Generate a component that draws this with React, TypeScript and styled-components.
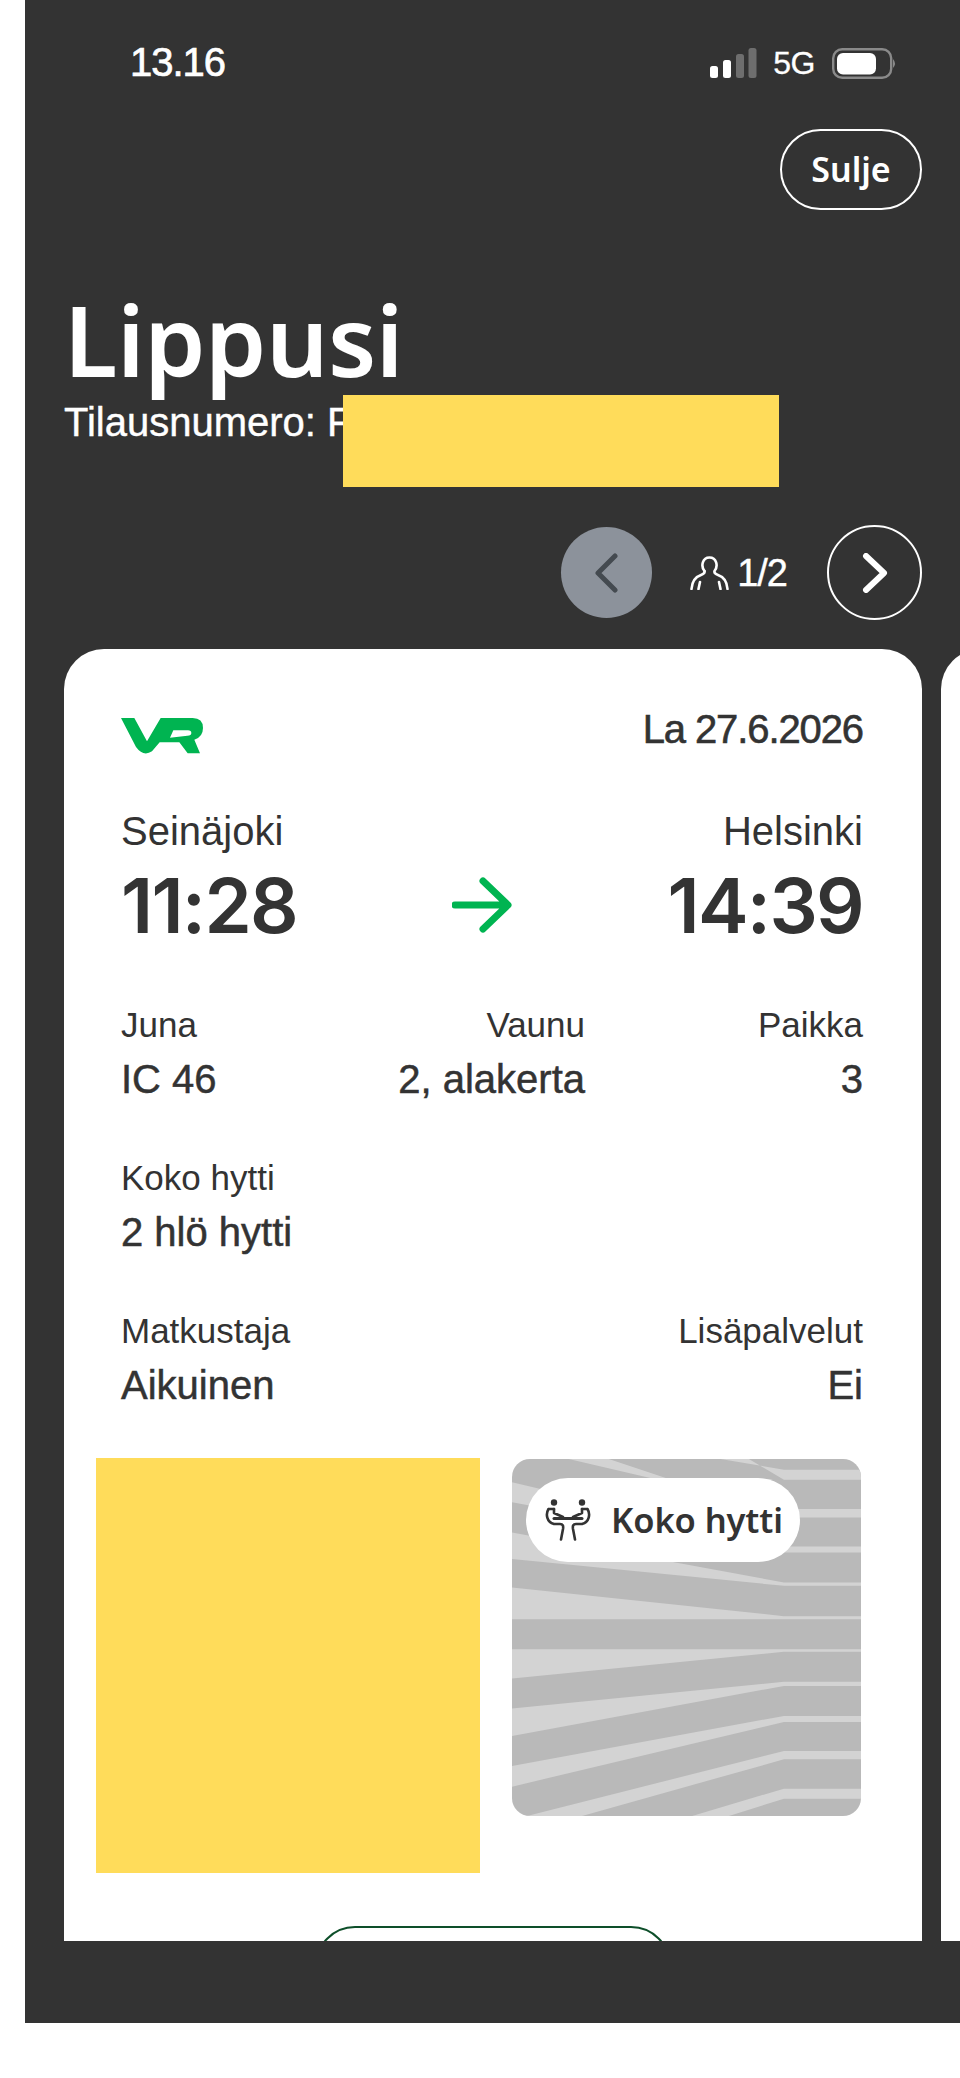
import React from "react";
import styled, { createGlobalStyle } from "styled-components";

const Global = createGlobalStyle`
  html, body { margin: 0; padding: 0; background: #fff; }
  #root { width: 960px; height: 2078px; overflow: hidden; }
`;
const HELV = `"Liberation Sans", Arial, sans-serif`;
const VRF = `"Noto Sans", sans-serif`;

const Page = styled.div`
  width: 960px; height: 2078px; background: #fff; padding-left: 25px; box-sizing: border-box; overflow: hidden;
`;
const Panel = styled.main`
  width: 935px; height: 2023px; background: #333; overflow: hidden; display: flex; flex-direction: column; color: #fff;
`;
const StatusBar = styled.div`
  height: 129px; box-sizing: border-box; padding: 42px 63px 0 105px; display: flex; justify-content: space-between; align-items: flex-start; flex: none;
`;
const Clock = styled.span`
  font: 400 40px/40px ${HELV}; letter-spacing: -1px; -webkit-text-stroke: .7px #fff;
`;
const StatusRight = styled.div`
  display: flex; align-items: center; margin-top: 5px;
`;
const Net = styled.span`
  font: 400 32px/32px ${HELV}; margin: 0 17px 0 16px; letter-spacing: -.5px; -webkit-text-stroke: .3px #fff;
`;
const CloseRow = styled.div`
  display: flex; justify-content: flex-end; padding-right: 38px; flex: none;
`;
const CloseButton = styled.button`
  width: 142px; height: 81px; border: 2px solid #fff; border-radius: 41px; background: transparent; color: #fff; box-sizing: border-box;
  font: 600 34px/1 ${VRF}; padding: 0 0 2px;
`;
const Title = styled.h1`
  margin: 70px 0 0 39px; padding: 0; font: 600 98px/118px ${VRF}; color: #fff; letter-spacing: -.5px; flex: none; height: 117px;
`;
const OrderLine = styled.div`
  position: relative; margin: 0 0 0 39px; font: 400 40px/46px ${HELV}; flex: none; padding-top: 2px; letter-spacing: 0; -webkit-text-stroke: .4px #fff;
`;
const Redaction = styled.div<{ $w: number; $h: number }>`
  position: absolute; background: #ffdc5a; width: ${p => p.$w}px; height: ${p => p.$h}px;
`;
const OrderRedaction = styled(Redaction)`
  left: 279px; top: -2px;
`;
const Nav = styled.div`
  display: flex; justify-content: flex-end; align-items: center; padding-right: 38px; margin-top: 80px; flex: none; height: 95px;
`;
const Circle = styled.button<{ $size: number; $disabled?: boolean }>`
  width: ${p => p.$size}px; height: ${p => p.$size}px; border-radius: 50%; box-sizing: border-box; padding: 0; display: flex; align-items: center; justify-content: center;
  border: ${p => (p.$disabled ? "none" : "2.5px solid #fff")}; background: ${p => (p.$disabled ? "#8c929b" : "transparent")};
`;
const Counter = styled.div`
  display: flex; align-items: center; gap: 8px; margin: 0 40px 0 38px; font: 400 38px/40px ${HELV}; letter-spacing: -1px; -webkit-text-stroke: .4px #fff;
`;
const Carousel = styled.div`
  display: flex; gap: 19px; margin: 29px 0 0 39px; flex: none; height: 1292px;
`;
const Card = styled.section`
  width: 858px; height: 1292px; flex: none; box-sizing: border-box; background: #fff; border-radius: 40px 40px 0 0; color: #333; padding: 69px 59px 0 57px; overflow: hidden;
`;
const NextCard = styled.div`
  width: 60px; height: 1292px; flex: none; background: #fff; border-radius: 40px 0 0 0;
`;
const Head = styled.div`
  display: flex; justify-content: space-between; align-items: flex-start; height: 80px;
`;
const DateText = styled.span`
  font: 400 40px/44px ${HELV}; letter-spacing: -1.1px; -webkit-text-stroke: .6px #333; margin-top: -11px;
`;
const Row = styled.div<{ $top: number }>`
  display: flex; justify-content: space-between; margin-top: ${p => p.$top}px;
`;
const Station = styled.span`
  font: 400 40px/46px ${HELV};
`;
const TimeRow = styled.div`
  display: flex; justify-content: space-between; align-items: center; height: 72px; margin-top: 15px;
`;
const Time = styled.span`
  font: 600 76px/72px Inter, sans-serif; letter-spacing: -1.7px;
`;
const ArrowBox = styled.span`
  display: flex;
`;
const Field = styled.div<{ $end?: boolean }>`
  display: flex; flex-direction: column; white-space: nowrap; align-items: ${p => (p.$end ? "flex-end" : "flex-start")};
`;
const Label = styled.span`
  font: 400 35px/40px ${HELV};
`;
const Value = styled.span`
  font: 400 40px/44px ${HELV}; margin-top: 12px; -webkit-text-stroke: .5px #333; letter-spacing: 0;
`;
const TripleRow = styled.div`
  display: grid; grid-template-columns: 1fr 184px 278px; margin-top: 64px;
`;
const Media = styled.div`
  display: flex; align-items: flex-start; margin: 51px 0 0 -25px;
`;
const MediaYellow = styled.div`
  width: 384px; height: 415px; background: #ffdc5a; flex: none;
`;
const CabinImage = styled.div`
  position: relative; width: 349px; height: 357px; margin: 1px 0 0 32px; border-radius: 18px; overflow: hidden; background: #b9b9b9; flex: none;
`;
const Stripes = styled.svg`
  display: block; width: 349px; height: 357px;
`;
const Badge = styled.div`
  position: absolute; left: 14px; top: 19px; width: 274px; height: 84px; border-radius: 42px; background: #fff; display: flex; align-items: center; padding-left: 19px; box-sizing: border-box; gap: 20px;
  color: #333; font: 600 34.5px/1 ${VRF}; letter-spacing: -.1px;
`;
const GreenButton = styled.div`
  width: 356px; height: 90px; border: 2.5px solid #0e4f2a; border-radius: 40px; margin: 53px 0 0 194px; box-sizing: border-box;
`;

const stripes = [
  "236,60 356,60 881,235 1112,235 1112,210 881,210",
  "691,60 776,60 881,122 1112,122 1112,92 881,92",
  "66,130 66,190 881,340 1112,340 1112,322 881,322",
  "66,280 66,360 881,440 1112,440 1112,430 881,430",
  "66,445 66,540 1112,540 1112,531 881,531",
  "66,630 66,718 881,638 1112,638 1112,630",
  "66,808 66,890 881,740 1112,740 1112,728 881,728",
  "66,980 66,1042 881,848 1112,848 1112,830 881,830",
  "111,1130 276,1130 881,960 1112,960 1112,935 881,935",
  "606,1130 716,1130 881,1078 1112,1078 1112,1048 881,1048",
];

function Signal() {
  return (
    <svg width="47" height="30" viewBox="0 0 47 30">
      <rect x="0" y="18" width="8" height="12" rx="2.5" fill="#fff" />
      <rect x="13" y="12" width="8" height="18" rx="2.5" fill="#fff" />
      <rect x="26" y="6" width="8" height="24" rx="2.5" fill="#6e6e6e" />
      <rect x="38.5" y="0" width="8" height="30" rx="2.5" fill="#6e6e6e" />
    </svg>
  );
}
function Battery() {
  return (
    <svg width="65" height="31" viewBox="0 0 65 31">
      <rect x="1.2" y="1.2" width="58" height="28.6" rx="9" fill="none" stroke="#8a8a8a" strokeWidth="2.4" />
      <rect x="5" y="5" width="39" height="21.5" rx="6" fill="#fff" />
      <path d="M61 11 Q65 15.5 61 20 Z" fill="#8a8a8a" />
    </svg>
  );
}
function VRLogo() {
  return (
    <svg width="82" height="36" viewBox="65 55 246 108">
      <path
        fill="#00b451"
        fillRule="evenodd"
        d="M65 55 H105 L143 125 L184 55 H280 Q311 55 311 85 Q311 112 285 120 L302 161 H265 L240 128 H181 L158 155 Q132 172 110 142 Z M222 92 H266 Q276 92 276 100 Q276 108 264 108 L212 114 Z"
      />
    </svg>
  );
}
function Person() {
  return (
    <svg width="39" height="34" viewBox="0 0 39 34" fill="none" stroke="#fff" strokeWidth="2.6" strokeLinecap="round">
      <path d="M14.5 15 C10.5 10 12.5 1.5 19.5 1.5 C26.5 1.5 28.5 10 24.5 15 C24 17 25 18 28 19 C34 21 37 26 37.5 33" />
      <path d="M14.5 15 C15 17 14 18 11 19 C5 21 2 26 1.5 33" />
      <path d="M10 26 L8.5 33 M29 26 L30.5 33" />
    </svg>
  );
}
function Cabin() {
  return (
    <svg width="46" height="42" viewBox="0 0 46 42" fill="none" stroke="#333" strokeWidth="2.6" strokeLinecap="round" strokeLinejoin="round">
      <circle cx="9" cy="3.5" r="3.2" fill="#333" stroke="none" />
      <circle cx="37" cy="3.5" r="3.2" fill="#333" stroke="none" />
      <path d="M3.5 10 C0.5 15 1.5 23 9 25 L15 25 C18 25 18.5 27 18 30 L16 40.5" />
      <path d="M42.5 10 C45.5 15 44.5 23 37 25 L31 25 C28 25 27.5 27 28 30 L30 40.5" />
      <path d="M9 10 L9 14 L18 18 M37 10 L37 14 L28 18" />
      <path d="M9 19.5 H37" strokeWidth="3" />
      <path d="M4 10 H9 M37 10 H42" />
    </svg>
  );
}

export default function App() {
  return (
    <Page>
      <Global />
      <Panel>
        <StatusBar>
          <Clock>13.16</Clock>
          <StatusRight>
            <Signal />
            <Net>5G</Net>
            <Battery />
          </StatusRight>
        </StatusBar>
        <CloseRow>
          <CloseButton>Sulje</CloseButton>
        </CloseRow>
        <Title>Lippusi</Title>
        <OrderLine>
          Tilausnumero: F
          <OrderRedaction $w={436} $h={92} />
        </OrderLine>
        <Nav>
          <Circle $size={91} $disabled aria-label="Edellinen">
            <svg width="26" height="40" viewBox="0 0 26 40" fill="none" stroke="#444a50" strokeWidth="5" strokeLinecap="round" strokeLinejoin="round">
              <path d="M21 3 L4 20 L21 37" />
            </svg>
          </Circle>
          <Counter>
            <Person />
            1/2
          </Counter>
          <Circle $size={95} aria-label="Seuraava">
            <svg width="28" height="40" viewBox="0 0 28 40" fill="none" stroke="#fff" strokeWidth="6" strokeLinecap="round" strokeLinejoin="round">
              <path d="M5 3 L23 20 L5 37" />
            </svg>
          </Circle>
        </Nav>
        <Carousel>
          <Card>
            <Head>
              <VRLogo />
              <DateText>La 27.6.2026</DateText>
            </Head>
            <Row $top={10}>
              <Station>Seinäjoki</Station>
              <Station>Helsinki</Station>
            </Row>
            <TimeRow>
              <Time>11:28</Time>
              <ArrowBox>
                <svg width="60" height="56" viewBox="0 0 60 56" fill="none" stroke="#00b451" strokeWidth="7" strokeLinecap="round" strokeLinejoin="round">
                  <path d="M3 28 H55 M31 4 L56 28 L31 52" />
                </svg>
              </ArrowBox>
              <Time>14:39</Time>
            </TimeRow>
            <TripleRow>
              <Field>
                <Label>Juna</Label>
                <Value>IC 46</Value>
              </Field>
              <Field $end>
                <Label>Vaunu</Label>
                <Value>2, alakerta</Value>
              </Field>
              <Field $end>
                <Label>Paikka</Label>
                <Value>3</Value>
              </Field>
            </TripleRow>
            <Row $top={57}>
              <Field>
                <Label>Koko hytti</Label>
                <Value>2 hlö hytti</Value>
              </Field>
            </Row>
            <Row $top={57}>
              <Field>
                <Label>Matkustaja</Label>
                <Value>Aikuinen</Value>
              </Field>
              <Field $end>
                <Label>Lisäpalvelut</Label>
                <Value>Ei</Value>
              </Field>
            </Row>
            <Media>
              <MediaYellow />
              <CabinImage>
                <Stripes viewBox="66 60 1046 1070" preserveAspectRatio="none">
                  {stripes.map(s => (
                    <polygon key={s} points={s} fill="#d3d3d3" />
                  ))}
                </Stripes>
                <Badge>
                  <Cabin />
                  Koko hytti
                </Badge>
              </CabinImage>
            </Media>
            <GreenButton />
          </Card>
          <NextCard />
        </Carousel>
      </Panel>
    </Page>
  );
}
